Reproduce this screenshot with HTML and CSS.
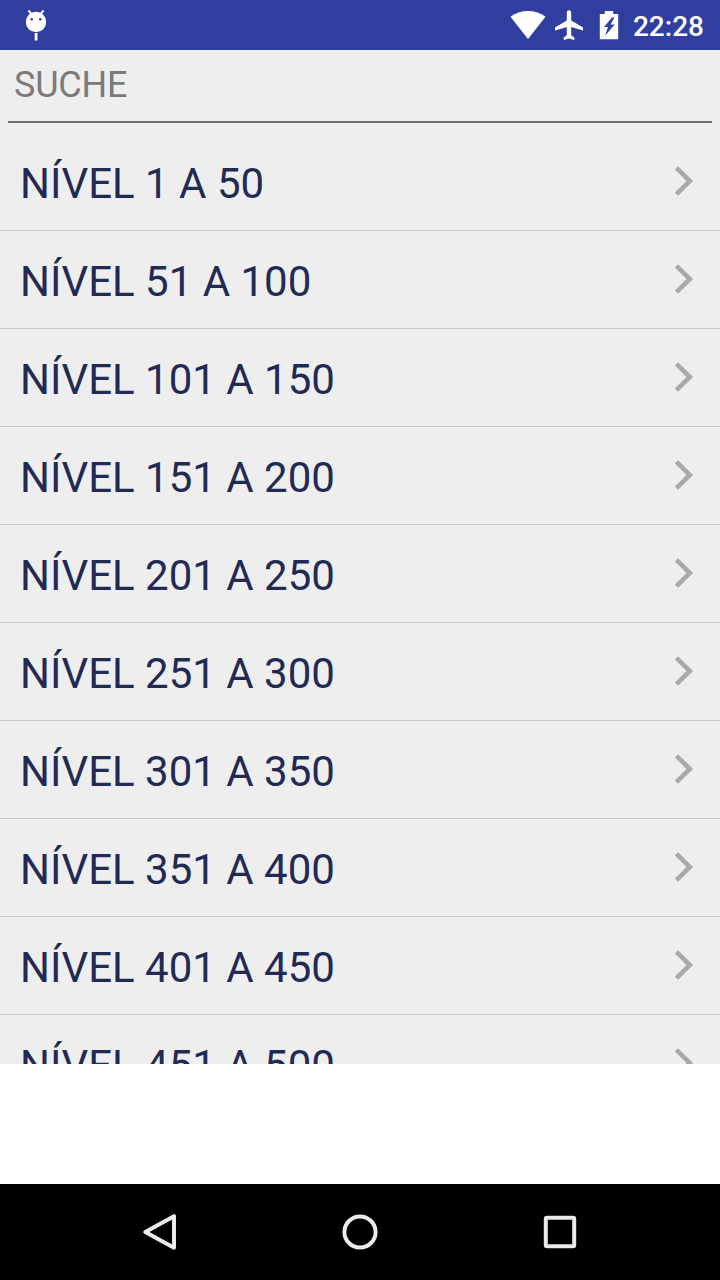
FILE: index.html
```
<!DOCTYPE html>
<html lang="pt">
<head>
    <meta charset="UTF-8">
    <title>Níveis</title>
    <link rel="stylesheet" href="styles.css">
</head>
<body>
    <div class="status-bar">
        <svg class="bug" width="24" height="34" viewBox="0 0 24 34">
            <path d="M4.500 2.500L7 5.500M19.500 2.500L17 5.500" stroke="#fff" stroke-width="2"/>
            <circle cx="12" cy="14" r="10.200" fill="#fff"/>
            <circle cx="7.700" cy="11.300" r="1.300" fill="#303f9f"/>
            <circle cx="16.300" cy="11.300" r="1.300" fill="#303f9f"/>
            <rect x="10.700" y="25" width="2.800" height="7.500" fill="#fff"/>
        </svg>
        <div class="status-icons">
            <svg class="wifi" width="36" height="30" viewBox="0 0 36 30">
                <path d="M18 29L.5 6.800C5.500 3 11.500 1 18 1s12.500 2 17.500 5.800z" fill="#fff"/>
            </svg>
            <svg class="plane" width="30" height="32" viewBox="0 0 30 32">
                <path d="M29 21.500v-3L17.200 11.500V3.500a2.200 2.200 0 0 0-4.400 0v8L1 18.500v3l11.800-3.600v8.300L9.700 28.500v2.400L15 29.600l5.300 1.300v-2.400l-3.100-2.300v-8.300z" fill="#fff"/>
            </svg>
            <svg class="battery" width="20" height="30" viewBox="0 0 20 30">
                <path d="M5.800 1h8.400v3h5v25.200H.8V4h5z" fill="#fff"/>
                <path d="M13 7.500L5 17h4L6 25.800l9.800-11.300h-4.300L15.500 7.500z" fill="#303f9f"/>
            </svg>
            <span class="clock">22:28</span>
        </div>
    </div>

    <div class="search">
        <input class="search-input" type="text" placeholder="SUCHE">
    </div>

    <ul class="level-list" id="levels"></ul>

    <div class="ad-space"></div>

    <div class="nav-bar">
        <svg width="40" height="40" viewBox="0 0 40 40">
            <path d="M5.300 20L34 4.200v31.600z"/>
        </svg>
        <svg width="40" height="40" viewBox="0 0 40 40">
            <circle cx="20" cy="20" r="15.600"/>
        </svg>
        <svg width="40" height="40" viewBox="0 0 40 40">
            <rect x="5.800" y="5.800" width="28.400" height="28.400" rx="1"/>
        </svg>
    </div>

    <script>
        const list = document.getElementById('levels');

        for (let i = 1; i <= 451; i += 50) {
            list.innerHTML += `
                <li class="level">
                    <span>NÍVEL ${i} A ${i + 49}</span>
                    <svg class="chevron" width="22" height="34" viewBox="0 0 22 34">
                        <path d="M3.500 3.800L16.800 17L3.500 30.200"/>
                    </svg>
                </li>`;
        }
    </script>
</body>
</html>
```
FILE: styles.css
```
* {
    box-sizing: border-box;
}
body {
    margin: 0;
    height: 1280px;
    display: flex;
    flex-direction: column;
    overflow: hidden;
    background: #eee;
    font-family: Roboto, sans-serif;
}
.status-bar {
    height: 50px;
    flex: none;
    display: flex;
    align-items: center;
    justify-content: space-between;
    padding: 0 16px 0 24px;
    background: #303f9f;
}
.status-icons {
    display: flex;
    align-items: center;
}
.plane {
    margin-left: 8px;
}
.battery {
    margin-left: 15px;
}
.clock {
    margin-left: 14px;
    padding-top: 4px;
    color: #fff;
    font-size: 28px;
    font-weight: 500;
    line-height: 34px;
}
.search {
    height: 83px;
    flex: none;
    padding: 0 8px 10px;
}
.search-input {
    display: block;
    width: 100%;
    height: 73px;
    padding: 0 6px 1px;
    border: none;
    border-bottom: 2px solid #6d6d6d;
    outline: none;
    background: transparent;
    font-family: inherit;
    font-size: 36px;
    letter-spacing: -0.2px;
}
.search-input::placeholder {
    color: #7a7a7a;
    opacity: 1;
}
.level-list {
    flex: 1;
    min-height: 0;
    margin: 0;
    padding: 0;
    overflow: hidden;
    list-style: none;
}
.level {
    height: 98px;
    display: flex;
    align-items: center;
    justify-content: space-between;
    padding: 4px 25px 0 20px;
    border-bottom: 1px solid #c8c9cb;
    color: #222a54;
    font-size: 42px;
}
.chevron {
    margin-bottom: 5px;
    fill: none;
    stroke: #a9a9ab;
    stroke-width: 4.6;
}
.ad-space {
    height: 120px;
    flex: none;
    background: #fff;
}
.nav-bar {
    height: 96px;
    flex: none;
    display: flex;
    align-items: center;
    justify-content: center;
    gap: 160px;
    background: #000;
}
.nav-bar svg {
    fill: none;
    stroke: #ebebeb;
    stroke-width: 4;
    stroke-linejoin: round;
}
```
